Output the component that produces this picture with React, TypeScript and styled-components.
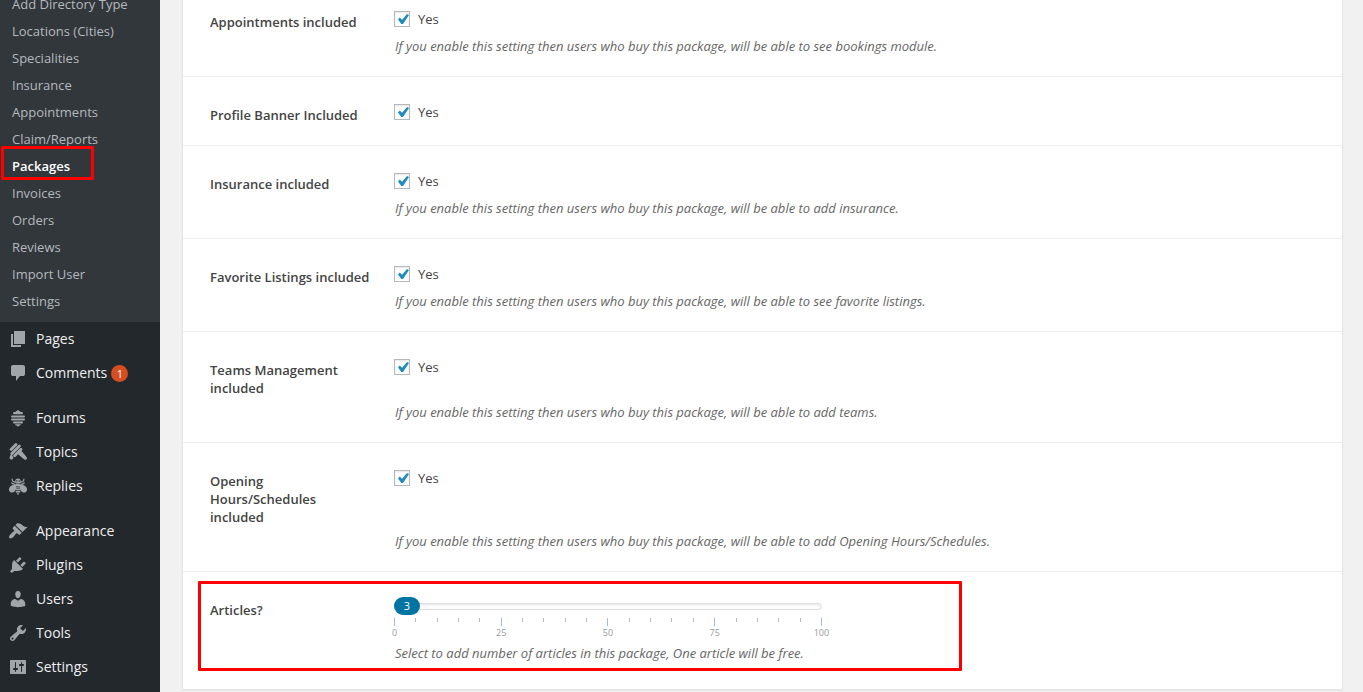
import React, { useState } from "react";
import styled, { createGlobalStyle } from "styled-components";

const GlobalStyle = createGlobalStyle`
  * { box-sizing: border-box; }
  html, body { margin: 0; padding: 0; }
  html { height: 100%; overflow: hidden; }
  body {
    min-height: 100%;
    background: #f1f1f1;
    color: #444;
    font-family: "Segoe UI", "Open Sans", "Noto Sans", sans-serif;
    font-size: 13px;
    line-height: 18px;
  }
`;

/* The page is scrolled part of the way down, so its top edge is out of view. */
const Shell = styled.div`
  display: flex;
  align-items: stretch;
  min-height: calc(100vh + 16px);
  margin-top: -16px;
`;

const Sidebar = styled.nav`
  flex: 0 0 160px;
  background: #23282d;
`;

const List = styled.ul`
  list-style: none;
  margin: 0;
  padding: 0;
`;

const SubMenu = styled(List)`
  padding: 7px 0;
  background: #32373c;
`;

const SubItem = styled.li`
  position: relative;
`;

const SubLink = styled.a<{ $current?: boolean }>`
  display: block;
  padding: 0 12px;
  font-size: 13px;
  line-height: 27px;
  text-decoration: none;
  white-space: nowrap;
  color: ${(p) => (p.$current ? "#fff" : "#b4b9be")};
  font-weight: ${(p) => (p.$current ? 600 : 400)};
`;

const Marker = styled.span`
  position: absolute;
  border: 3px solid #fe0000;
  border-radius: 1px;
  pointer-events: none;
`;

const LinkMarker = styled(Marker)`
  top: -7px;
  left: 1px;
  width: 93px;
  height: 34px;
`;

const MenuGroup = styled(List)`
  & + & { margin-top: 11px; }
`;

const MenuLink = styled.a`
  display: flex;
  align-items: center;
  height: 34px;
  padding-left: 8px;
  gap: 8px;
  color: #eee;
  font-size: 14px;
  line-height: 18px;
  text-decoration: none;
`;

const Icon = styled.svg`
  flex: none;
  width: 20px;
  height: 20px;
  fill: #a0a5aa;
  stroke: none;
`;

const Count = styled.span`
  display: inline-block;
  width: 17px;
  height: 17px;
  margin-left: -4px;
  border-radius: 9px;
  background: #d54e21;
  color: #fff;
  font-size: 11px;
  line-height: 17px;
  text-align: center;
`;

const Main = styled.main`
  flex: 1;
  min-width: 0;
  padding: 0 20px 12px 22px;
`;

const Card = styled.form`
  padding-bottom: 6px;
  background: #fff;
  border: 1px solid #e5e5e5;
  border-top: 0;
  box-shadow: 0 1px 1px rgba(0, 0, 0, 0.04);
`;

const Row = styled.div`
  position: relative;
  display: grid;
  grid-template-columns: 161px minmax(0, 1fr);
  column-gap: 23px;
  padding: 25px 27px 21px;
  & + & { border-top: 1px solid #eee; }
`;

const Title = styled.label`
  padding-top: 4px;
  font-size: 13px;
  font-weight: 600;
  line-height: 18px;
  color: #444;
`;

const Choice = styled.label`
  display: flex;
  align-items: center;
  gap: 8px;
  height: 20px;
`;

const Checkbox = styled.input`
  appearance: none;
  position: relative;
  flex: none;
  width: 16px;
  height: 16px;
  margin: 0;
  border: 1px solid #b4b9be;
  background: #fff;
  box-shadow: inset 0 1px 2px rgba(0, 0, 0, 0.1);
  &:checked::before {
    content: "";
    position: absolute;
    top: 2px;
    left: 3px;
    width: 11px;
    height: 10px;
    background: #1e8cbe;
    clip-path: polygon(82% 0, 100% 10%, 46% 100%, 30% 100%, 0 54%, 16% 36%, 37% 58%);
  }
`;

const Help = styled.p`
  grid-column: 2;
  margin: 0;
  padding: 6px 0 0 1px;
  font-size: 13px;
  font-style: italic;
  line-height: 18px;
  color: #666;
`;

const SliderField = styled.div`
  width: 428px;
  max-width: 100%;
`;

const SliderBar = styled.div`
  position: relative;
  display: flex;
  align-items: center;
  height: 18px;
`;

const Range = styled.input`
  appearance: none;
  width: 100%;
  height: 7px;
  margin: 0;
  border: 1px solid #ddd;
  border-radius: 4px;
  background: #fff;
  box-shadow: inset 0 1px 3px rgba(0, 0, 0, 0.1);
  &::-webkit-slider-thumb {
    appearance: none;
    width: 26px;
    height: 18px;
    opacity: 0;
  }
`;

const Thumb = styled.output`
  position: absolute;
  top: 0;
  width: 26px;
  height: 18px;
  border-radius: 9px;
  background: #0074a2;
  color: #fff;
  font-size: 11px;
  line-height: 18px;
  text-align: center;
  pointer-events: none;
`;

const Scale = styled.div`
  display: flex;
  justify-content: space-between;
  height: 20px;
  margin-top: 3px;
`;

const Tick = styled.span<{ $major: boolean }>`
  display: flex;
  justify-content: center;
  width: 1px;
  height: ${(p) => (p.$major ? 8 : 4)}px;
  background: ${(p) => (p.$major ? "#9dc0e0" : "#bbb")};
`;

const TickLabel = styled.span`
  padding-top: 9px;
  font-size: 9px;
  line-height: 11px;
  color: #999;
`;

const RowMarker = styled(Marker)`
  top: 9px;
  left: 15px;
  width: 764px;
  max-width: calc(100% - 30px);
  height: 90px;
`;

const SUB_LINKS = [
  "Add Directory Type",
  "Locations (Cities)",
  "Specialities",
  "Insurance",
  "Appointments",
  "Claim/Reports",
  "Packages",
  "Invoices",
  "Orders",
  "Reviews",
  "Import User",
  "Settings",
];

const ICONS: Record<string, React.ReactNode> = {
  Pages: <path d="M6 15V2h11v13H6zm-1 1h8v2H3V5h2v11z" />,
  Comments: (
    <path d="M5 2h10q.82 0 1.41.59T17 4v7q0 .82-.59 1.41T15 13h-3l-4 5v-5H5q-.82 0-1.41-.59T3 11V4q0-.82.59-1.41T5 2z" />
  ),
  Forums: (
    <>
      <path d="M7.400 4.300c.3-1 .9-1.300 1.700-1.500.1-.5.500-.8.900-.8s.8.300.9.800c.8.200 1.400.5 1.700 1.500z" />
      <rect x="5" y="3.900" width="10" height="2.400" rx="1.200" />
      <rect x="3" y="7.500" width="14" height="2" rx="1" />
      <rect x="3" y="10.500" width="14" height="2" rx="1" />
      <rect x="5" y="13.500" width="10" height="2" rx="1" />
      <path d="M7 16.200h6c-.2.900-.9 1.200-1.700 1.300-.2.600-.7 1-1.300 1s-1.100-.4-1.300-1C7.900 17.400 7.200 17.100 7 16.200z" />
    </>
  ),
  Topics: (
    <>
      <g transform="rotate(-45 10 10)">
        <rect x="5.500" y="1.800" width="9.800" height="2.900" rx="1.400" />
        <rect x="3" y="5.300" width="13.600" height="2.900" rx="1.400" />
        <rect x="3.600" y="8.800" width="11.800" height="2.900" rx="1.400" />
      </g>
      <path d="M9.500 11.700l3.500-3.500 5.700 7.100c.5.700.3 1.700-.3 2.200-.7.500-1.600.4-2.100-.1z" />
      <path d="M3.300 12s2 2.500 2 3.800c0 1.100-.9 1.800-1.900 1.800s-1.900-.8-1.900-1.800c0-1.200 1.800-3.800 1.800-3.800z" />
    </>
  ),
  Replies: (
    <>
      <path d="M7.200 4.900C7.600 3.300 8.600 2.500 10 2.500s2.400.8 2.800 2.400c.4 1.300-.4 2.300-1.200 2.700H8.400c-.8-.4-1.600-1.400-1.200-2.700z" />
      <path
        d="M7.300 6.200C5.200 6 3.700 4.900 4.200 2.600M12.700 6.200c2.100-.2 3.600-1.300 3.100-3.600M7.300 8.300C5 8.300 4.200 7.800 3.400 6.700M12.700 8.300c2.300 0 3.100-.5 3.900-1.600"
        fill="none"
        stroke="#a0a5aa"
        strokeWidth="1.200"
      />
      <path d="M8.400 8.500C5.600 8.500 2.400 9.500 1.300 11.700c-.9 1.800-.2 4 1.600 4.700 2.700 1 4.600-1.500 5.500-4.900zM11.600 8.500c2.800 0 6 1 7.100 3.200.9 1.800.2 4-1.600 4.700-2.700 1-4.600-1.500-5.500-4.900z" />
      <path d="M7.700 8h4.600l.4 2H7.300zM8.500 10.500h3v1.300h-3zM7.500 12.600h5v1.600h-5zM7.400 15h5.200l-.6 1.500H8zM8.500 17.200h3L10 19z" />
      <circle cx="8.800" cy="5" r=".7" fill="#23282d" />
      <circle cx="11.200" cy="5" r=".7" fill="#23282d" />
    </>
  ),
  Appearance: (
    <path d="M14.480 11.060L7.410 3.990l1.500-1.500c.5-.56 2.300-.47 3.510.32 1.210.8 1.430 1.280 2.910 2.100 1.180.64 2.450 1.260 4.450.85zm-.71.71L6.700 4.700 4.930 6.470c-.39.39-.39 1.020 0 1.410l1.060 1.060c.39.39.39 1.030 0 1.420-.6.6-1.430 1.110-2.210 1.690-.35.26-.7.53-1.010.84C1.430 14.230.4 16.080 1.400 17.070c.99 1 2.840-.03 4.180-1.360.31-.31.58-.66.85-1.020.57-.78 1.080-1.610 1.690-2.210.39-.39 1.020-.39 1.410 0l1.060 1.060c.39.39 1.020.39 1.410 0z" />
  ),
  Plugins: (
    <path d="M13.110 4.360L9.870 7.600 8 5.730l3.240-3.240c.35-.34 1.050-.2 1.560.32.52.51.66 1.210.31 1.550zm-8 1.770l.91-1.120 9.010 9.010-1.190.84c-.71.71-2.630 1.160-3.820 1.160H6.140L4.900 17.260c-.59.59-1.540.59-2.120 0-.59-.58-.59-1.530 0-2.120l1.240-1.240v-3.880c0-1.130.4-3.190 1.090-3.890zm7.260 3.970l3.240-3.240c.34-.35 1.040-.21 1.550.31.52.51.66 1.210.31 1.550l-3.240 3.250z" />
  ),
  Users: (
    <path d="M10 9.250c-2.270 0-2.730-3.440-2.730-3.440C7 4.020 7.820 2 9.970 2c2.160 0 2.980 2.020 2.710 3.810 0 0-.41 3.440-2.680 3.440zm0 2.570L12.720 10c2.390 0 4.520 2.330 4.520 4.530v2.490s-3.650 1.130-7.240 1.130c-3.650 0-7.240-1.130-7.240-1.130v-2.490c0-2.250 1.940-4.480 4.470-4.480z" />
  ),
  Tools: (
    <path d="M16.680 9.770c-1.340 1.340-3.300 1.670-4.950.99l-5.410 6.520c-.99.99-2.590.99-3.580 0s-.99-2.590 0-3.570l6.520-5.420c-.68-1.650-.35-3.610.99-4.950 1.280-1.280 3.120-1.620 4.720-1.060l-2.890 2.890 2.820 2.820 2.860-2.870c.53 1.580.18 3.390-1.080 4.650zM3.810 16.210c.4.39 1.040.39 1.430 0 .4-.4.4-1.040 0-1.430-.39-.4-1.030-.4-1.430 0-.39.39-.39 1.030 0 1.430z" />
  ),
  Settings: (
    <path d="M18 16V4c0-.55-.45-1-1-1H3c-.55 0-1 .45-1 1v12c0 .55.45 1 1 1h14c.55 0 1-.45 1-1zM8 11h1c.55 0 1 .45 1 1s-.45 1-1 1H8v1.500c0 .28-.22.5-.5.5s-.5-.22-.5-.5V13H6c-.55 0-1-.45-1-1s.45-1 1-1h1V5.500c0-.28.22-.5.5-.5s.5.22.5.5V11zm5-2h-1c-.55 0-1-.45-1-1s.45-1 1-1h1V5.500c0-.28.22-.5.5-.5s.5.22.5.5V7h1c.55 0 1 .45 1 1s-.45 1-1 1h-1v5.500c0 .28-.22.5-.5.5s-.5-.22-.5-.5V9z" />
  ),
};

const MENU_GROUPS = [
  ["Pages", "Comments"],
  ["Forums", "Topics", "Replies"],
  ["Appearance", "Plugins", "Users", "Tools", "Settings"],
];

const OPTIONS = [
  {
    id: "appointments",
    title: "Appointments included",
    help: "If you enable this setting then users who buy this package, will be able to see bookings module.",
  },
  { id: "banner", title: "Profile Banner Included" },
  {
    id: "insurance",
    title: "Insurance included",
    help: "If you enable this setting then users who buy this package, will be able to add insurance.",
  },
  {
    id: "favorites",
    title: "Favorite Listings included",
    help: "If you enable this setting then users who buy this package, will be able to see favorite listings.",
  },
  {
    id: "teams",
    title: "Teams Management included",
    help: "If you enable this setting then users who buy this package, will be able to add teams.",
  },
  {
    id: "hours",
    title: "Opening Hours/Schedules included",
    help: "If you enable this setting then users who buy this package, will be able to add Opening Hours/Schedules.",
  },
];

const TICKS = Array.from({ length: 21 }, (_, i) => i * 5);

function ArticlesSlider() {
  const [value, setValue] = useState(3);
  return (
    <SliderField>
      <SliderBar>
        <Range
          id="articles"
          type="range"
          min={0}
          max={100}
          value={value}
          onChange={(e) => setValue(Number(e.target.value))}
        />
        <Thumb
          htmlFor="articles"
          style={{ left: `clamp(0px, calc(${value}% - 13px), calc(100% - 26px))` }}
        >
          {value}
        </Thumb>
      </SliderBar>
      <Scale>
        {TICKS.map((tick) => (
          <Tick key={tick} $major={tick % 25 === 0}>
            {tick % 25 === 0 && <TickLabel>{tick}</TickLabel>}
          </Tick>
        ))}
      </Scale>
    </SliderField>
  );
}

export default function App() {
  return (
    <>
      <GlobalStyle />
      <Shell>
        <Sidebar aria-label="Admin menu">
          <SubMenu>
            {SUB_LINKS.map((name) => (
              <SubItem key={name}>
                <SubLink href="#" $current={name === "Packages"}>
                  {name}
                </SubLink>
                {name === "Packages" && <LinkMarker />}
              </SubItem>
            ))}
          </SubMenu>
          {MENU_GROUPS.map((group) => (
            <MenuGroup key={group[0]}>
              {group.map((name) => (
                <li key={name}>
                  <MenuLink href="#">
                    <Icon viewBox="0 0 20 20" aria-hidden="true">
                      {ICONS[name]}
                    </Icon>
                    {name}
                    {name === "Comments" && <Count>1</Count>}
                  </MenuLink>
                </li>
              ))}
            </MenuGroup>
          ))}
        </Sidebar>
        <Main>
          <Card>
            {OPTIONS.map((option) => (
              <Row key={option.id}>
                <Title htmlFor={option.id}>{option.title}</Title>
                <Choice>
                  <Checkbox id={option.id} type="checkbox" defaultChecked />
                  Yes
                </Choice>
                {option.help && <Help>{option.help}</Help>}
              </Row>
            ))}
            <Row>
              <Title htmlFor="articles">Articles?</Title>
              <ArticlesSlider />
              <Help>Select to add number of articles in this package, One article will be free.</Help>
              <RowMarker />
            </Row>
          </Card>
        </Main>
      </Shell>
    </>
  );
}
